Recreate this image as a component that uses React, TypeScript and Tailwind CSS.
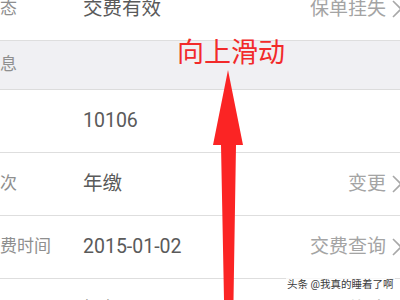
import React from "react";

const Chevron = () => (
  <svg width="10" height="18" viewBox="0 0 10 18" className="ml-[6px] shrink-0">
    <path d="M1 1 L9 9 L1 17" fill="none" stroke="#a8a8a8" strokeWidth="1.6" />
  </svg>
);

type RowProps = { label: string; value: string; right?: string };

const Row = ({ label, value, right }: RowProps) => (
  <div className="flex h-[63px] items-center border-b border-[#dedede] bg-white">
    <div className="ml-[-17px] w-[100px] shrink-0 whitespace-nowrap text-[17px] text-[#8f8f8f]">{label}</div>
    <div className="whitespace-nowrap text-[19.5px] text-[#5a5a5a]">{value}</div>
    {right !== undefined && (
      <div className="ml-auto mr-[-2px] flex items-center">
        <span className="whitespace-nowrap text-[19px] text-[#a4a4a4]">{right}</span>
        <Chevron />
      </div>
    )}
  </div>
);

export default function App() {
  return (
    <div
      className="relative h-[300px] w-[400px] overflow-hidden bg-white"
      style={{ fontFamily: "Roboto, 'Noto Sans CJK SC', sans-serif" }}
    >
      <div className="mt-[-22px]">
        <Row label="状态" value="交费有效" right="保单挂失" />
        <div className="flex h-[49px] items-center border-b border-[#dcdcdc] bg-[#f0f0f3]">
          <div className="ml-[-17px] whitespace-nowrap text-[17px] text-[#8f8f8f]">信息</div>
        </div>
        <Row label="" value="10106" />
        <Row label="频次" value="年缴" right="变更" />
        <Row label="交费时间" value="2015-01-02" right="交费查询" />
        <Row label="方式" value="银行" right="修改" />
      </div>

      <div className="absolute left-[177px] top-[40px] whitespace-nowrap text-[27px] leading-none text-[#f22a2a]">
        向上滑动
      </div>

      <svg className="absolute left-0 top-0" width="400" height="300" viewBox="0 0 400 300">
        <polygon
          points="228,70 243,145 236,145 233.5,300 224,300 221,145 213,145"
          fill="#fb2424"
        />
      </svg>

      <div className="absolute left-[286px] top-[278px] whitespace-nowrap bg-white/80 px-[1px] text-[10.5px] leading-[14px] text-[#3a3a3a]">
        头条 @我真的睡着了啊
      </div>
    </div>
  );
}
